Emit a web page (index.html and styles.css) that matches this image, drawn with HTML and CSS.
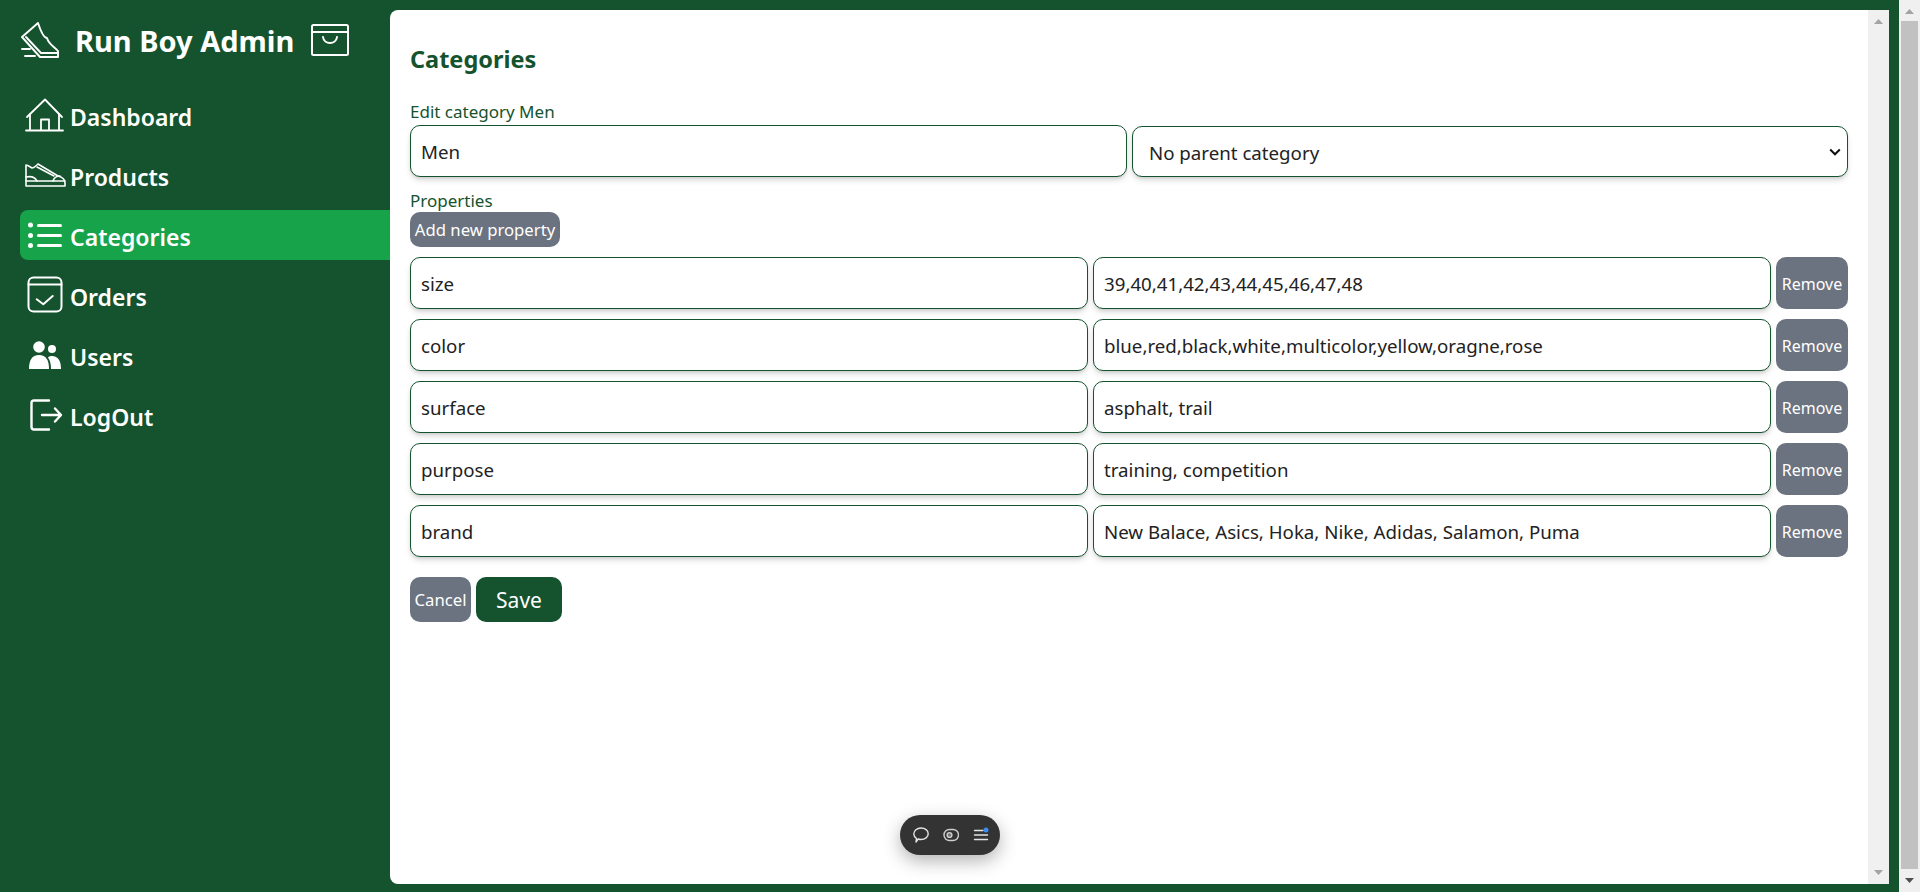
FILE: index.html
```html
<!DOCTYPE html>
<html lang="en">
<head>
<meta charset="utf-8">
<title>Run Boy Admin</title>
<link rel="stylesheet" href="styles.css">
</head>
<body>
<div class="app">
  <aside class="sidebar">
    <div class="brand">
      <svg class="brand-shoe" viewBox="0 0 40 38" fill="none" stroke="#fff" stroke-width="1.9" stroke-linejoin="round" stroke-linecap="round"><path d="M18 1 L2 15 L20 35 H38 V29 C34 24 29 23 27 16 C24 16 21 10 18 1 Z"/><path d="M6 15 L21 31 H38"/><path d="M2 27 H10 M5 34 H15"/></svg>
      <span class="brand-name">Run Boy Admin</span>
      <svg class="brand-bag" viewBox="0 0 38 32" fill="none" stroke="#fff" stroke-width="2" stroke-linejoin="round" stroke-linecap="round"><rect x="1" y="1" width="36" height="30" rx="1.5"/><path d="M1 8 H37"/><path d="M12 13 C13 21 25 21 26 13"/></svg>
    </div>
    <nav class="nav">
      <a class="nav-link">
        <svg class="nav-icon" viewBox="0 0 44 50" fill="none" stroke="#fff" stroke-width="1.8" stroke-linecap="round" stroke-linejoin="round"><path d="M5 27 L23 9.5 L40 27"/><path d="M8 24 V40 M37 24 V40 M4 40.5 H41"/><path d="M19 40 V29.5 H27 V40"/></svg>
        <span class="nav-text">Dashboard</span>
      </a>
      <a class="nav-link">
        <svg class="nav-icon" viewBox="0 0 44 50" fill="none" stroke="#fff" stroke-width="1.6" stroke-linejoin="round" stroke-linecap="round"><path d="M4 36 V15 C6 15 8 17 10 18 C12 18 14 16 16 14 L36 26 C40 27 43 29 43 33 V36 Z"/><path d="M4 31 H43"/><path d="M4 27 C9 26 13 27 15 31"/><path d="M31 31 C32 28 35 26 38 26"/><path d="M15 17 L32 26"/></svg>
        <span class="nav-text">Products</span>
      </a>
      <a class="nav-link active">
        <svg class="nav-icon" viewBox="0 0 44 50" fill="#fff"><rect x="15" y="14" width="25" height="3" rx="1.5"/><rect x="15" y="24" width="25" height="3" rx="1.5"/><rect x="15" y="34" width="25" height="3" rx="1.5"/><circle cx="8.5" cy="15" r="2.5"/><circle cx="8.5" cy="25.5" r="2.5"/><circle cx="8.5" cy="35.5" r="2.5"/></svg>
        <span class="nav-text">Categories</span>
      </a>
      <a class="nav-link">
        <svg class="nav-icon" viewBox="0 0 44 50" fill="none" stroke="#fff" stroke-width="2" stroke-linecap="round" stroke-linejoin="round"><rect x="6.5" y="7.5" width="33" height="34" rx="5"/><path d="M6.5 14.5 H39.5"/><path d="M14.7 29.3 L21.3 34.3 L30.7 26"/></svg>
        <span class="nav-text">Orders</span>
      </a>
      <a class="nav-link">
        <svg class="nav-icon" viewBox="0 0 44 50" fill="#fff"><circle cx="17" cy="17" r="5.8"/><circle cx="30" cy="19" r="4"/><path d="M7 39 C7 30 10 25 17 25 C24 25 27 30 27 39 Z"/><path d="M29 39 H39 C39 31 36 26 30 26 C28 26 27 26.5 26 27.5 C28 30 29 34 29 39 Z"/></svg>
        <span class="nav-text">Users</span>
      </a>
      <a class="nav-link">
        <svg class="nav-icon" viewBox="0 0 44 50" fill="none" stroke="#fff" stroke-width="2.4" stroke-linecap="round" stroke-linejoin="round"><path d="M27 10.5 H12 C10 10.5 9.5 11.5 9.5 13 V37 C9.5 38.5 10 39.5 12 39.5 H27"/><path d="M20 25 H38.5 M33 18.5 L39 25 L33 31.5"/></svg>
        <span class="nav-text">LogOut</span>
      </a>
    </nav>
  </aside>
  <div class="shell">
    <main class="panel">
      <div class="content">
        <h1 class="title">Categories</h1>
        <form class="form">
          <label class="label">Edit category Men</label>
          <div class="row-top">
            <input class="field" value="Men">
            <select class="field select"><option>No parent category</option></select>
          </div>
          <label class="label label-props">Properties</label>
          <button type="button" class="btn-add">Add new property</button>
          <div class="props">
            <div class="prop"><input class="field" value="size"><input class="field" value="39,40,41,42,43,44,45,46,47,48"><button type="button" class="btn-remove">Remove</button></div>
            <div class="prop"><input class="field" value="color"><input class="field" value="blue,red,black,white,multicolor,yellow,oragne,rose"><button type="button" class="btn-remove">Remove</button></div>
            <div class="prop"><input class="field" value="surface"><input class="field" value="asphalt, trail"><button type="button" class="btn-remove">Remove</button></div>
            <div class="prop"><input class="field" value="purpose"><input class="field" value="training, competition"><button type="button" class="btn-remove">Remove</button></div>
            <div class="prop"><input class="field" value="brand"><input class="field" value="New Balace, Asics, Hoka, Nike, Adidas, Salamon, Puma"><button type="button" class="btn-remove">Remove</button></div>
          </div>
          <div class="actions">
            <button type="button" class="btn-cancel">Cancel</button>
            <button type="button" class="btn-save">Save</button>
          </div>
        </form>
      </div>
      <div class="scroll scroll-inner">
        <svg class="arrow" viewBox="0 0 9 5"><path d="M4.5 0 L9 5 H0 Z"/></svg>
        <svg class="arrow" viewBox="0 0 9 5"><path d="M0 0 H9 L4.5 5 Z"/></svg>
      </div>
    </main>
  </div>
  <div class="scroll scroll-page">
    <svg class="arrow" viewBox="0 0 9 5"><path d="M4.5 0 L9 5 H0 Z"/></svg>
    <div class="thumb"></div>
    <svg class="arrow arrow-dark" viewBox="0 0 9 5"><path d="M0 0 H9 L4.5 5 Z"/></svg>
  </div>
</div>
<div class="pill">
  <svg class="pill-icon" viewBox="0 0 16 16" fill="none" stroke="#e5e5e5" stroke-width="1.4" stroke-linejoin="round" stroke-linecap="round"><path d="M3 15 L3.5 11.5 C1.5 10 .8 8.5 .8 7 C.8 3.5 4 1 8 1 C12 1 15.2 3.3 15.2 6.7 C15.2 10 12 12.5 8 12.5 C7 12.5 6 12.3 5.2 12 Z"/></svg>
  <svg class="pill-icon" viewBox="0 0 16 16" fill="none" stroke="#cfcfcf" stroke-width="1.4"><rect x="1" y="2.5" width="14.5" height="11" rx="5.5"/><circle cx="6.5" cy="8" r="2.4" fill="#777"/></svg>
  <svg class="pill-icon" viewBox="0 0 16 16" fill="none" stroke="#e5e5e5" stroke-width="1.4" stroke-linecap="round"><path d="M1.5 3.5 H10 M1.5 8 H14.5 M1.5 12.5 H14.5"/><circle cx="13" cy="3" r="2.5" fill="#3b8df0" stroke="none"/></svg>
</div>
</body>
</html>
```

FILE: styles.css
```css
* { box-sizing: border-box; }
html, body { margin: 0; height: 100%; overflow: hidden; }
body { font-family: "Noto Sans", "Open Sans", sans-serif; color: #14532d; }

.app { display: flex; height: 892px; background: #14532d; }

.sidebar { width: 390px; flex: none; padding: 18px 0 0 20px; color: #fff; }
.brand { display: flex; align-items: center; height: 46px; margin-bottom: 26px; }
.brand-shoe { width: 40px; height: 38px; flex: none; }
.brand-name { margin-left: 15px; margin-top: -1px; font-size: 29px; font-weight: 700; white-space: nowrap; }
.brand-bag { width: 38px; height: 32px; flex: none; margin-left: 17px; margin-top: -2px; }

.nav { display: flex; flex-direction: column; gap: 10px; }
.nav-link { display: flex; align-items: center; height: 50px; border-radius: 8px 0 0 8px; padding-left: 2px; gap: 4px; font-size: 23px; font-weight: 600; color: #fff; }
.nav-link.active { background: #16a34a; }
.nav-icon { width: 44px; height: 50px; flex: none; }
.nav-text { padding-top: 3px; }

.shell { flex: 1; padding: 10px 10px 8px 0; min-width: 0; }
.panel { display: flex; height: 100%; background: #fff; border-radius: 8px 0 0 8px; }
.content { flex: 1; min-width: 0; padding: 33px 20px 0; }
.title { margin: 0 0 24px; font-size: 23.5px; line-height: 32px; font-weight: 700; color: #14532d; }

.form { display: flex; flex-direction: column; align-items: stretch; }
.label { display: block; font-size: 17px; line-height: 26px; color: #14532d; }
.label-props { margin-top: 12px; line-height: 23px; }

.field { display: block; width: 100%; min-width: 0; height: 52px; padding: 0 10px; background: #fff; border: 1px solid #14532d; border-radius: 10px; box-shadow: 0 4px 6px -1px rgba(0,0,0,.15), 0 2px 4px -2px rgba(0,0,0,.15); font-family: inherit; font-size: 18.7px; color: #222; outline: none; }
.select { height: 51px; margin-top: 1px; padding: 2px 10px 0 16px; appearance: none; -webkit-appearance: none; background-image: url("data:image/svg+xml,%3Csvg xmlns='http://www.w3.org/2000/svg' viewBox='0 0 12 8'%3E%3Cpath d='M1.2 1.5 L6 6.3 L10.8 1.5' fill='none' stroke='%23111' stroke-width='2'/%3E%3C/svg%3E"); background-repeat: no-repeat; background-size: 12px 8px; background-position: right 6px center; }

.row-top { display: grid; grid-template-columns: 717px 1fr; column-gap: 5px; }

button { font-family: inherit; border: 0; color: #fff; cursor: pointer; padding: 0; }
.btn-add { align-self: flex-start; width: 150px; height: 35px; background: #6b7280; border-radius: 10px; font-size: 16.7px; }

.props { display: flex; flex-direction: column; gap: 10px; margin-top: 10px; }
.prop { display: flex; gap: 5px; }
.prop .field { flex: 1; }
.btn-remove { flex: none; width: 72px; height: 52px; padding-top: 2px; background: #6b7280; border-radius: 10px; font-size: 16px; }

.actions { display: flex; gap: 5px; margin-top: 20px; }
.btn-cancel { width: 61px; height: 45px; background: #6b7280; border-radius: 10px; font-size: 16.7px; }
.btn-save { width: 86px; height: 45px; background: #14532d; border-radius: 10px; font-size: 21px; }

.scroll { flex: none; width: 21px; display: flex; flex-direction: column; justify-content: space-between; align-items: center; background: #f0f0f0; }
.scroll-inner { padding: 9px 0; }
.scroll-page { padding: 9px 0; }
.arrow { width: 9px; height: 5px; fill: #a3a3a3; flex: none; }
.arrow-dark { fill: #505050; }
.thumb { width: 17px; flex: 1; margin: 7px 0 9px; background: #c1c1c1; }

.pill { position: fixed; left: 900px; top: 815px; width: 100px; height: 40px; display: flex; align-items: center; justify-content: center; gap: 14px; padding-left: 2px; border-radius: 20px; background: #333; box-shadow: 0 6px 18px rgba(0,0,0,.3); }
.pill-icon { width: 16px; height: 16px; flex: none; }
```
